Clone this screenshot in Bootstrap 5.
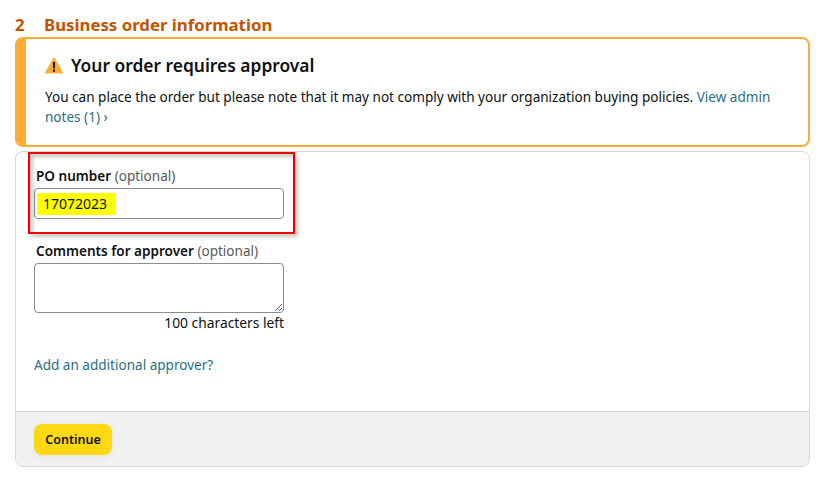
<!doctype html>
<html lang="en">
  <head>
    <meta charset="utf-8">
    <meta name="viewport" content="width=device-width, initial-scale=1">
    <title>Business order information</title>
    <link href="https://cdn.jsdelivr.net/npm/bootstrap@5.3.2/dist/css/bootstrap.min.css" rel="stylesheet">
    <style>
      body {
        font-family: "Noto Sans", "Liberation Sans", sans-serif;
        font-size: 13.56px;
        line-height: 20px;
        color: #0f1111;
        background: #fff;
        padding: 14px 8px 0 15px;
      }
      .step-title {
        color: #c45500;
        font-size: 16.8px;
        font-weight: 700;
        line-height: 22px;
        margin: 0 0 1px;
        height: 22px;
      }
      .step-num {
        width: 29px;
      }
      .warn-box {
        height: 110px;
        border: 2px solid #ffac38;
        border-left-width: 11px;
        border-radius: 8px;
        padding: 14px 18px 0 19px;
        margin-bottom: 4px;
      }
      .warn-title {
        font-size: 17.4px;
        font-weight: 600;
        line-height: 24px;
        margin: 0 0 10px;
        gap: 8px;
      }
      .warn-box p {
        margin: 0;
        line-height: 20px;
        color: #0f1111;
      }
      a.amz-link {
        color: #2a6f82;
        text-decoration: none;
      }
      .order-card {
        height: 316px;
        border: 1px solid #d5d9d9;
        border-radius: 8px;
        overflow: hidden;
      }
      .order-body {
        height: 259px;
        padding: 14px 18px 0;
        position: relative;
      }
      .order-foot {
        height: 55px;
        background: #f0f2f2;
        border-top: 1px solid #d5d9d9;
        padding: 12px 18px 0;
      }
      .field-box {
        width: 250px;
      }
      .field-box label {
        display: block;
        padding-left: 2px;
        margin-bottom: 2px;
        font-weight: 600;
      }
      .field-po {
        margin-bottom: 22px;
      }
      .opt-text {
        font-weight: 400;
        color: #565959;
      }
      .po-input.form-control {
        height: 31px;
        padding: 4px 2px;
        border: 1px solid #888c8c;
        border-radius: 4px;
        font-size: 14px;
        line-height: 22px;
        color: #0f1111;
      }
      .po-mark {
        display: inline-block;
        width: 79px;
        height: 22px;
        padding-left: 6px;
        background: #ffff00;
      }
      .comment-input.form-control {
        height: 50px;
        min-height: 50px;
        padding: 4px 7px;
        border: 1px solid #888c8c;
        border-radius: 4px;
      }
      .chars-left {
        text-align: right;
        font-size: 13.8px;
      }
      .approver-row {
        margin-top: 22px;
      }
      .red-frame {
        position: absolute;
        left: 12px;
        top: 0;
        width: 267px;
        height: 82px;
        border: 2px solid #f00000;
        box-shadow: 3px 3px 4px rgba(0, 0, 0, .22), inset 3px 3px 4px rgba(0, 0, 0, .22);
        pointer-events: none;
      }
      .continue-btn.btn {
        width: 78px;
        height: 31px;
        padding: 1px 0 0;
        border: 0;
        border-radius: 8px;
        background: #ffd814;
        color: #0f1111;
        font-size: 12.5px;
        font-weight: 600;
        box-shadow: 0 2px 5px rgba(213, 217, 217, .5);
      }
    </style>
  </head>
  <body>
    <h1 class="step-title d-flex">
      <span class="step-num">2</span>
      <span>Business order information</span>
    </h1>

    <div class="warn-box">
      <h2 class="warn-title d-flex align-items-center">
        <svg width="18" height="17" viewBox="0 0 18 17" aria-hidden="true">
          <path d="M9 1 17.3 15.8H.7Z" fill="#ffac38" stroke="#ffac38" stroke-width="1.4" stroke-linejoin="round"/>
          <path d="M7.8 5h2.4l-.4 6.6H8.2ZM8 12.6h2v2.1H8Z" fill="#0f1111"/>
        </svg>
        <span>Your order requires approval</span>
      </h2>
      <p>You can place the order but please note that it may not comply with your organization buying policies. <a class="amz-link" href="#">View admin notes (1) ›</a></p>
    </div>

    <div class="order-card">
      <div class="order-body">
        <div class="field-box field-po">
          <label for="poField">PO number <span class="opt-text">(optional)</span></label>
          <div class="form-control po-input" id="poField"><span class="po-mark">17072023</span></div>
        </div>
        <div class="red-frame"></div>
        <div class="field-box">
          <label for="commentField">Comments for approver <span class="opt-text">(optional)</span></label>
          <textarea class="form-control comment-input" id="commentField"></textarea>
          <div class="chars-left">100 characters left</div>
        </div>
        <div class="approver-row">
          <a class="amz-link" href="#">Add an additional approver?</a>
        </div>
      </div>
      <div class="order-foot">
        <button type="button" class="btn continue-btn">Continue</button>
      </div>
    </div>
    <script src="https://cdn.jsdelivr.net/npm/bootstrap@5.3.2/dist/js/bootstrap.bundle.min.js"></script>
  </body>
</html>
